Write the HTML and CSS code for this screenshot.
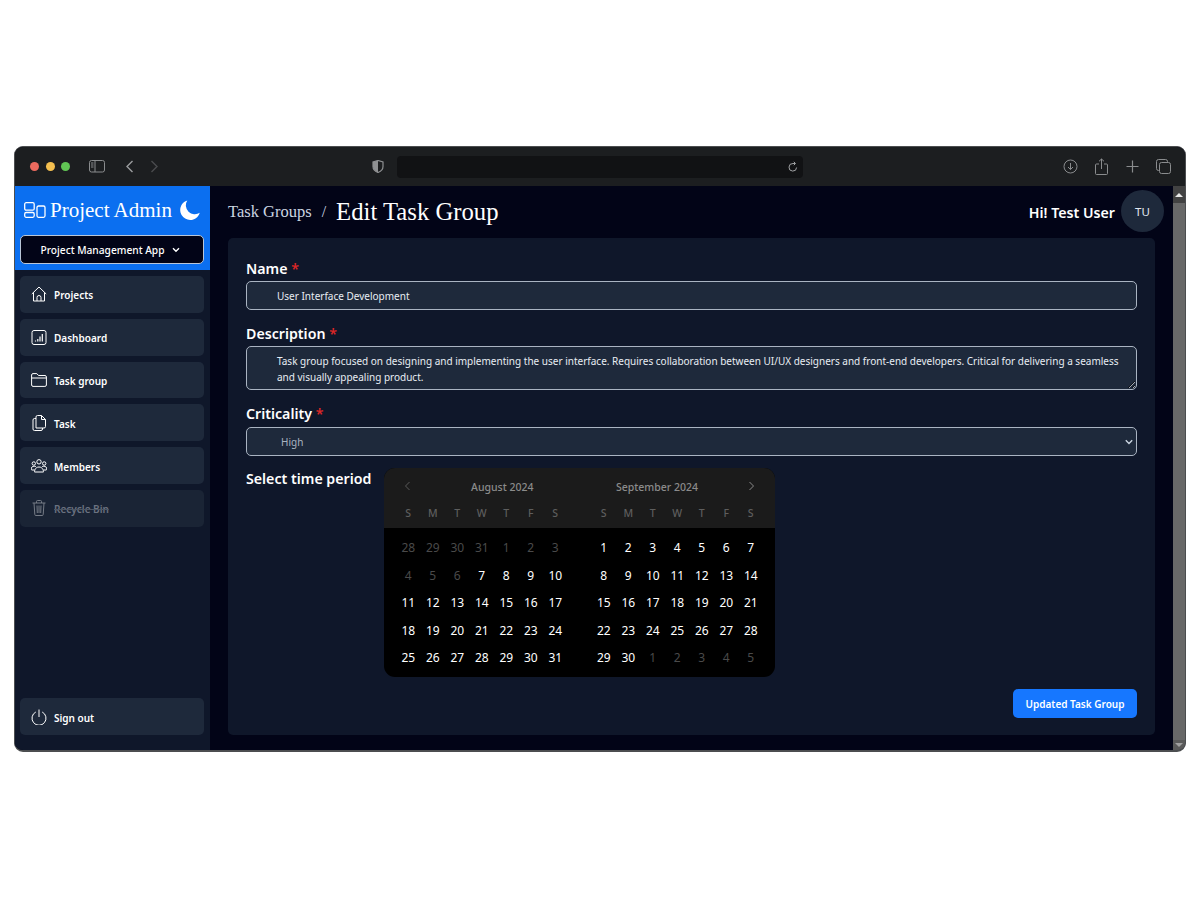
FILE: index.html
```html
<!DOCTYPE html>
<html lang="en">
<head>
<meta charset="utf-8">
<title>Edit Task Group</title>
<link rel="stylesheet" href="styles.css">
</head>
<body>
<div class="window">
  <div class="toolbar">
    <div class="tb-left">
      <span class="dot red"></span><span class="dot yellow"></span><span class="dot green"></span>
      <svg class="tb-side" width="16" height="13" viewBox="0 0 16 13" fill="none" stroke="#8a8c8e" stroke-width="1"><rect x=".5" y=".5" width="15" height="11.5" rx="2"/><path d="M6 .5V12M2 3h2.500M2 5h2.500M2 7h2.500"/></svg>
      <svg class="tb-back" width="9" height="13" viewBox="0 0 9 13" fill="none" stroke="#9a9c9e" stroke-width="1.400"><path d="M7.500 1 2 6.500 7.500 12"/></svg>
      <svg class="tb-fwd" width="9" height="13" viewBox="0 0 9 13" fill="none" stroke="#4a4c4e" stroke-width="1.400"><path d="M1.500 1 7 6.500 1.500 12"/></svg>
    </div>
    <div class="tb-mid">
      <svg class="tb-shield" width="12" height="13" viewBox="0 0 12 13"><path d="M6 .5 11 2v4.500c0 3-2.500 5-5 6-2.500-1-5-3-5-6V2z" fill="none" stroke="#8f9193" stroke-width="1.200"/><path d="M6 .5v12c-2.500-1-5-3-5-6V2z" fill="#8f9193"/></svg>
      <div class="urlbar">
        <svg width="10" height="11" viewBox="0 0 10 11" fill="none" stroke="#a0a2a4" stroke-width="1"><path d="M8.600 6.500A3.800 3.800 0 1 1 5 2.500h2M5.800 .8 7.500 2.500 5.800 4.200"/></svg>
      </div>
    </div>
    <div class="tb-right">
      <svg width="15" height="15" viewBox="0 0 15 15" fill="none" stroke="#8a8c8e" stroke-width="1"><circle cx="7.500" cy="7.500" r="6.500"/><path d="M7.500 4v6.500M5 8l2.500 2.500L10 8"/></svg>
      <svg width="13" height="17" viewBox="0 0 13 17" fill="none" stroke="#8a8c8e" stroke-width="1"><path d="M4 6H1.500a1 1 0 0 0-1 1v8.500a1 1 0 0 0 1 1h10a1 1 0 0 0 1-1V7a1 1 0 0 0-1-1H9M6.500 11V1M4 3.300 6.500 1 9 3.300"/></svg>
      <svg width="13" height="13" viewBox="0 0 13 13" fill="none" stroke="#8a8c8e" stroke-width="1.200"><path d="M6.500 .5v12M.5 6.500h12"/></svg>
      <svg width="15" height="15" viewBox="0 0 15 15" fill="none" stroke="#8a8c8e" stroke-width="1"><rect x="3.500" y="3.500" width="11" height="11" rx="2"/><path d="M3.500 11.500h-1a2 2 0 0 1-2-2v-7a2 2 0 0 1 2-2h7a2 2 0 0 1 2 2v1"/></svg>
    </div>
  </div>
  <div class="viewport">
    <aside class="sidebar">
      <div class="brand">
        <div class="brand-row">
          <svg class="brand-logo" width="22" height="16" viewBox="0 0 22 16" fill="none" stroke="#fff" stroke-width="1.300"><rect x=".7" y=".7" width="9.500" height="7.500" rx="1.500"/><rect x=".7" y="10.500" width="9.500" height="4.800" rx="1.500"/><rect x="13" y="4" width="8" height="11.300" rx="1.500"/></svg>
          <span class="brand-name">Project Admin</span>
          <svg class="brand-moon" width="20" height="20" viewBox="0 0 20 20"><path d="M7.300.4A10 10 0 1 0 19.800 12.800 9 9 0 0 1 7.300.4z" fill="#fff"/></svg>
        </div>
        <div class="app-select">
          <span>Project Management App</span>
          <svg width="8" height="6" viewBox="0 0 8 6" fill="none" stroke="#fff" stroke-width="1.400"><path d="M1 1.300 4 4.300 7 1.300"/></svg>
        </div>
      </div>
      <nav class="nav">
        <a class="nav-item">
          <svg class="nav-icon" width="16" height="16" viewBox="0 0 16 16" fill="none" stroke="#fff" stroke-width="1"><path d="M.8 8 8 1l7.200 7M2.500 6.500V15h11V6.500M6 15v-3.500a2 2 0 0 1 4 0V15"/></svg>
          <span>Projects</span>
        </a>
        <a class="nav-item">
          <svg class="nav-icon" width="16" height="15" viewBox="0 0 16 15" fill="none" stroke="#fff" stroke-width="1"><rect x="1" y=".5" width="14" height="14" rx="2"/><path d="M4.500 11.500v-1M6.800 11.500V9M9 11.500V6.500M11.300 11.500V4" stroke-width="1.200"/></svg>
          <span>Dashboard</span>
        </a>
        <a class="nav-item">
          <svg class="nav-icon" width="16" height="14" viewBox="0 0 16 14" fill="none" stroke="#fff" stroke-width="1"><path d="M.6 12V2A1.500 1.500 0 0 1 2 .6h3.800L7.500 2.500h6.500A1.500 1.500 0 0 1 15.400 4v8a1.500 1.500 0 0 1-1.500 1.400H2A1.500 1.500 0 0 1 .6 12zM.6 5h14.800"/></svg>
          <span>Task group</span>
        </a>
        <a class="nav-item">
          <svg class="nav-icon" width="15" height="16" viewBox="0 0 15 16" fill="none" stroke="#fff" stroke-width="1"><path d="M4.500 13V2a1.500 1.500 0 0 1 1.500-1.500h4l4 4V11.500A1.500 1.500 0 0 1 12.500 13zM10 .5V4.500h4M4.500 3.500H3A1.500 1.500 0 0 0 1.500 5v9A1.500 1.500 0 0 0 3 15.500h6.500a1.500 1.500 0 0 0 1.500-1.500v-1"/></svg>
          <span>Task</span>
        </a>
        <a class="nav-item">
          <svg class="nav-icon" width="16" height="14" viewBox="0 0 16 14" fill="none" stroke="#fff" stroke-width="1"><circle cx="8" cy="2.800" r="2.200"/><circle cx="2.800" cy="4.500" r="1.700"/><circle cx="13.200" cy="4.500" r="1.700"/><path d="M3.500 13c0-1 .5-5 4.500-5s4.500 4 4.500 5zM3.500 11H1c-.5 0-.8-.4-.8-1 0-1.500 1-2.800 3-2.800.8 0 1.300.2 1.800.5M12.500 11H15c.5 0 .8-.4.800-1 0-1.500-1-2.800-3-2.800-.8 0-1.300.2-1.800.5"/></svg>
          <span>Members</span>
        </a>
        <a class="nav-item nav-disabled">
          <svg class="nav-icon" width="14" height="16" viewBox="0 0 14 16" fill="none" stroke="#fff" stroke-width="1"><path d="M.5 3h13M4.500 3V1.500a1 1 0 0 1 1-1h3a1 1 0 0 1 1 1V3M2 3l.8 11.500a1 1 0 0 0 1 1h6.400a1 1 0 0 0 1-1L12 3M5 5.500l.3 7.500M9 5.500 8.700 13M7 5.500V13"/></svg>
          <span>Recycle Bin</span>
        </a>
      </nav>
      <div class="nav-foot">
        <a class="nav-item">
          <svg class="nav-icon" width="16" height="16" viewBox="0 0 16 16" fill="none" stroke="#fff" stroke-width="1"><path d="M8 .5v7.500M4.800 3A7 7 0 1 0 11.200 3"/></svg>
          <span>Sign out</span>
        </a>
      </div>
    </aside>
    <main class="main">
      <header class="topbar">
        <div class="crumbs">
          <span class="crumb">Task Groups</span>
          <span class="crumb-sep">/</span>
          <h1 class="title">Edit Task Group</h1>
        </div>
        <div class="user">
          <span class="user-name">Hi! Test User</span>
          <span class="avatar">TU</span>
        </div>
      </header>
      <form class="card">
        <label class="label label-name">Name <span class="req">*</span></label>
        <input class="field field-input" type="text" value="User Interface Development">
        <label class="label label-desc">Description <span class="req">*</span></label>
        <textarea class="field field-area" rows="2">Task group focused on designing and implementing the user interface. Requires collaboration between UI/UX designers and front-end developers. Critical for delivering a seamless and visually appealing product.</textarea>
        <label class="label label-crit">Criticality <span class="req">*</span></label>
        <select class="field field-select"><option>High</option></select>
        <div class="period">
          <label class="label period-label">Select time period</label>
          <div class="cal">
            <div class="cal-head">
              <div class="month">
                <div class="month-title">
                  <svg class="arrow" width="7" height="10" viewBox="0 0 7 10" fill="none" stroke="#5a5a5a" stroke-width="1"><path d="M5.500 1 1.500 5l4 4"/></svg>
                  <span>August 2024</span>
                </div>
                <div class="grid dow"><span>S</span><span>M</span><span>T</span><span>W</span><span>T</span><span>F</span><span>S</span></div>
              </div>
              <div class="month">
                <div class="month-title month-title-end">
                  <span>September 2024</span>
                  <svg class="arrow" width="7" height="10" viewBox="0 0 7 10" fill="none" stroke="#8a8a8a" stroke-width="1"><path d="M1.500 1l4 4-4 4"/></svg>
                </div>
                <div class="grid dow"><span>S</span><span>M</span><span>T</span><span>W</span><span>T</span><span>F</span><span>S</span></div>
              </div>
            </div>
            <div class="cal-body">
              <div class="grid days">
                <span class="off">28</span><span class="off">29</span><span class="off">30</span><span class="off">31</span><span class="off">1</span><span class="off">2</span><span class="off">3</span>
                <span class="off">4</span><span class="off">5</span><span class="off">6</span><span>7</span><span>8</span><span>9</span><span>10</span>
                <span>11</span><span>12</span><span>13</span><span>14</span><span>15</span><span>16</span><span>17</span>
                <span>18</span><span>19</span><span>20</span><span>21</span><span>22</span><span>23</span><span>24</span>
                <span>25</span><span>26</span><span>27</span><span>28</span><span>29</span><span>30</span><span>31</span>
              </div>
              <div class="grid days">
                <span>1</span><span>2</span><span>3</span><span>4</span><span>5</span><span>6</span><span>7</span>
                <span>8</span><span>9</span><span>10</span><span>11</span><span>12</span><span>13</span><span>14</span>
                <span>15</span><span>16</span><span>17</span><span>18</span><span>19</span><span>20</span><span>21</span>
                <span>22</span><span>23</span><span>24</span><span>25</span><span>26</span><span>27</span><span>28</span>
                <span>29</span><span>30</span><span class="off">1</span><span class="off">2</span><span class="off">3</span><span class="off">4</span><span class="off">5</span>
              </div>
            </div>
          </div>
        </div>
        <div class="actions"><button class="submit" type="button">Updated Task Group</button></div>
      </form>
    </main>
    <div class="scrollbar">
      <div class="sb-btn"><span class="sb-up"></span></div>
      <div class="sb-thumb"></div>
      <div class="sb-btn sb-bottom"><span class="sb-down"></span></div>
    </div>
  </div>
</div>
</body>
</html>
```

FILE: styles.css
```css
* { box-sizing: border-box; }
html, body { margin: 0; height: 100%; background: #fff; }
body {
  display: flex;
  align-items: center;
  justify-content: center;
  font-family: "Noto Sans", sans-serif;
  color: #fff;
}
.window {
  width: 1172px;
  height: 606px;
  border: 1px solid #4c4e50;
  border-bottom-width: 2px;
  border-radius: 9px;
  overflow: hidden;
  display: flex;
  flex-direction: column;
  background: #020417;
  margin-top: -2px;
}
.toolbar {
  height: 39px;
  flex: none;
  background: #1c1e20;
  display: flex;
  align-items: center;
}
.tb-left { width: 357px; padding-left: 15px; display: flex; align-items: center; }
.dot { width: 9px; height: 9px; border-radius: 50%; margin-right: 6.500px; }
.red { background: #ec6a5e; }
.yellow { background: #f4bf4f; }
.green { background: #61c554; }
.tb-side { margin-left: 12px; }
.tb-back { margin-left: 20px; }
.tb-fwd { margin-left: 16px; }
.tb-mid { display: flex; align-items: center; }
.tb-shield { margin-right: 13px; }
.urlbar {
  width: 406px;
  height: 22px;
  background: #111214;
  border-radius: 4px;
  display: flex;
  align-items: center;
  justify-content: flex-end;
  padding-right: 5px;
}
.tb-right {
  margin-left: auto;
  width: 108px;
  margin-right: 14px;
  display: flex;
  align-items: center;
  justify-content: space-between;
}
.viewport { flex: 1; display: flex; min-height: 0; }
.sidebar {
  width: 195px;
  flex: none;
  background: #0f172a;
  display: flex;
  flex-direction: column;
}
.brand {
  height: 84px;
  flex: none;
  background: #0b6ff0;
  padding: 9px 6px 0 5px;
}
.brand-row { display: flex; align-items: center; height: 30px; padding-left: 4px; }
.brand-logo { flex: none; }
.brand-name {
  font-family: "Liberation Serif", serif;
  font-size: 21px;
  margin-left: 4px;
  white-space: nowrap;
}
.brand-moon { margin-left: 8px; flex: none; }
.app-select {
  height: 29px;
  margin-top: 10px;
  background: #020417;
  border: 1px solid #b9c6d8;
  border-radius: 5px;
  display: flex;
  align-items: center;
  justify-content: center;
  gap: 7px;
  padding-right: 4px;
  font-size: 10.200px;
  font-weight: 500;
}
.nav {
  padding: 6px 6px 0 5px;
  display: flex;
  flex-direction: column;
  gap: 6px;
}
.nav-item {
  height: 36.800px;
  background: #1e293b;
  border-radius: 5px;
  display: flex;
  align-items: center;
  font-size: 10px;
  font-weight: 600;
  color: #fff;
  padding-left: 11px;
}
.nav-item span { margin-top: 2px; }
.nav-icon { width: 16px; margin-right: 7px; flex: none; }
.nav-disabled { color: #6b7280; background: #1a2435; }
.nav-disabled .nav-icon { opacity: .4; }
.nav-disabled span { text-decoration: line-through; text-decoration-thickness: .5px; text-decoration-color: #4b5563; }
.nav-foot { margin-top: auto; padding: 0 6px 15px 5px; }
.main { flex: 1; min-width: 0; display: flex; flex-direction: column; padding: 0 18px 15px; }
.topbar {
  height: 52px;
  flex: none;
  display: flex;
  align-items: center;
  justify-content: space-between;
}
.crumbs { display: flex; align-items: center; font-family: "Liberation Serif", serif; }
.crumb { font-size: 16.500px; color: #cbd5e1; }
.crumb-sep { font-size: 16px; color: #cbd5e1; margin: 0 10px; }
.title { font-size: 24.700px; font-weight: 400; margin: 0; }
.user { display: flex; align-items: center; gap: 6px; margin-right: -9px; }
.user-name { font-size: 14.200px; font-weight: 600; }
.avatar {
  width: 43px;
  height: 42px;
  margin-bottom: 2px;
  border-radius: 50%;
  background: #1e293b;
  display: flex;
  align-items: center;
  justify-content: center;
  font-size: 11.500px;
  color: #e2e8f0;
}
.card {
  flex: 1;
  background: #0f172a;
  border-radius: 5px;
  padding: 21px 18px 17px;
  display: flex;
  flex-direction: column;
  min-height: 0;
}
.label { font-size: 14.200px; font-weight: 600; line-height: 20px; display: block; white-space: nowrap; }
.req { color: #dc2626; }
.label-name { margin-bottom: 2px; }
.label-desc { margin-top: 14px; margin-bottom: 2px; }
.label-crit { margin-top: 14px; margin-bottom: 3px; }
.field {
  display: block;
  width: 100%;
  background: #1e293b;
  border: 1px solid #aab4c2;
  border-radius: 5px;
  color: #e8edf3;
  font-family: "Noto Sans", sans-serif;
  font-size: 10px;
  outline: none;
  margin: 0;
}
.field-input { height: 29px; padding: 0 30px; flex: none; }
.field-area {
  height: 44px;
  flex: none;
  padding: 6px 12px 0 30px;
  line-height: 16px;
  resize: vertical;
}
.field-select {
  height: 29px;
  flex: none;
  padding-left: 34px;
  color: #a9b3c0;
  appearance: none;
  background-image: url("data:image/svg+xml,%3Csvg xmlns='http://www.w3.org/2000/svg' width='8' height='6' viewBox='0 0 8 6' fill='none' stroke='%23cbd5e1' stroke-width='1.400'%3E%3Cpath d='M.8 1.300 4 4.500 7.200 1.300'/%3E%3C/svg%3E");
  background-repeat: no-repeat;
  background-position: right 3px center;
}
.period { display: flex; align-items: flex-start; margin-top: 12px; }
.period-label { width: 138px; flex: none; padding-top: 1px; }
.cal {
  width: 391px;
  height: 209px;
  border-radius: 11px;
  overflow: hidden;
  background: #000;
  display: flex;
  flex-direction: column;
  color: #fff;
  font-size: 12px;
}
.cal-head {
  height: 60px;
  flex: none;
  background: #1b1b1b;
  display: grid;
  grid-template-columns: 171.500px 171.500px;
  justify-content: space-between;
  padding: 0 12px;
}
.month-title {
  height: 38px;
  display: flex;
  align-items: center;
  gap: 60px;
  padding: 0 8px;
  color: #8b8b8b;
  font-size: 10.500px;
  font-weight: 500;
}
.month-title-end { justify-content: flex-end; gap: 50px; }
.arrow { width: 7px; margin-top: -2px; }
.grid { display: grid; grid-template-columns: repeat(7, 1fr); text-align: center; }
.dow { font-size: 10.500px; color: #5e5e5e; font-weight: 500; line-height: 14px; }
.cal-body {
  display: grid;
  grid-template-columns: 171.500px 171.500px;
  justify-content: space-between;
  padding: 6px 12px 0;
}
.days { grid-auto-rows: 27.500px; align-items: center; }
.off { color: #4a4a4a; }
.actions { margin-top: auto; display: flex; justify-content: flex-end; }
.submit {
  width: 124px;
  height: 29px;
  background: #1677ff;
  border: 0;
  border-radius: 5px;
  color: #fff;
  font-family: "Noto Sans", sans-serif;
  font-size: 10px;
  font-weight: 600;
  padding: 0;
}
.scrollbar {
  width: 12px;
  flex: none;
  background: #686868;
  display: flex;
  flex-direction: column;
  justify-content: space-between;
}
.sb-thumb { flex: 1; }
.sb-btn { height: 17px; background: #424242; display: flex; align-items: center; justify-content: center; }
.sb-bottom { height: 10px; background: #5a5a5a; }
.sb-up { border: 4px solid transparent; border-top: 0; border-bottom-color: #e8e8e8; }
.sb-down { border: 4px solid transparent; border-bottom: 0; border-top-color: #a0a0a0; }
```
